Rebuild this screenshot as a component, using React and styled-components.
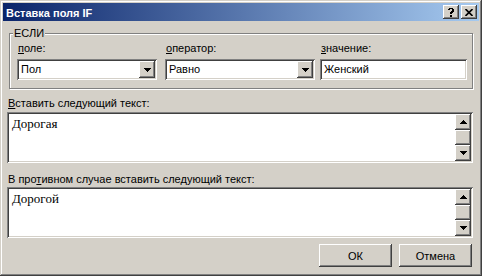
import { createGlobalStyle, styled } from "styled-components";

const GlobalStyle = createGlobalStyle`
  html, body {
    margin: 0;
    padding: 0;
    background: #d4d0c8;
  }
  body {
    font-family: "Liberation Sans", Arial, sans-serif;
    font-size: 11px;
    color: #000;
  }
`;

const raised = `
  box-shadow: inset -1px -1px #404040, inset 1px 1px #ffffff,
    inset -2px -2px #808080, inset 2px 2px #d4d0c8;
`;

const sunken = `
  box-shadow: inset 1px 1px #808080, inset -1px -1px #ffffff,
    inset 2px 2px #404040, inset -2px -2px #d4d0c8;
`;

const StyledWindow = styled.div`
  width: 482px;
  height: 276px;
  box-sizing: border-box;
  padding: 3px;
  background: #d4d0c8;
  box-shadow: inset -1px -1px #404040, inset 1px 1px #d4d0c8,
    inset -2px -2px #808080, inset 2px 2px #ffffff;
  display: flex;
  flex-direction: column;
`;

const StyledTitleBar = styled.div`
  height: 18px;
  display: flex;
  align-items: center;
  padding: 0 2px 0 3px;
  background: linear-gradient(to right, #0a246a, #a6caf0);
  color: #fff;
  font-weight: bold;
  font-size: 11px;
`;

const StyledTitle = styled.div`
  flex: 1;
  padding-top: 1px;
`;

const StyledTitleButton = styled.div`
  width: 16px;
  height: 14px;
  margin-left: ${(p) => (p.$gap ? "2px" : "0")};
  background: #d4d0c8;
  ${raised}
  display: flex;
  align-items: center;
  justify-content: center;
  color: #000;
`;

const StyledBody = styled.div`
  flex: 1;
  padding: 12px 6px 0 4px;
  display: flex;
  flex-direction: column;
`;

const StyledGroup = styled.div`
  position: relative;
  box-sizing: border-box;
  margin-left: 2px;
  height: 56px;
  border: 1px solid #808080;
  box-shadow: inset 1px 1px #ffffff, 1px 1px #ffffff;
  padding: 8px 0 0 7px;
  display: grid;
  grid-template-columns: 140px 150px 144px;
  align-content: start;
  column-gap: 8px;
`;

const StyledCaption = styled.span`
  position: absolute;
  top: -7px;
  left: 3px;
  padding: 0 1px;
  background: #d4d0c8;
  line-height: 13px;
`;

const StyledColumn = styled.div`
  display: flex;
  flex-direction: column;
  gap: 4px;
  margin-left: ${(p) => p.$shift || 0}px;
`;

const StyledLabel = styled.div`
  line-height: 13px;
  white-space: nowrap;
  margin-top: ${(p) => p.$top || 0}px;
  margin-left: 1px;
`;

const StyledField = styled.div`
  height: 21px;
  box-sizing: border-box;
  background: #fff;
  ${sunken}
  display: flex;
  align-items: center;
  padding: 2px;
`;

const StyledFieldText = styled.div`
  flex: 1;
  padding-left: 2px;
  line-height: 13px;
`;

const StyledDropButton = styled.div`
  width: 16px;
  height: 17px;
  background: #d4d0c8;
  ${raised}
  display: flex;
  align-items: center;
  justify-content: center;
`;

const StyledMemo = styled.div`
  height: 51px;
  box-sizing: border-box;
  margin-top: ${(p) => p.$top || 0}px;
  background: #fff;
  ${sunken}
  padding: 2px;
  display: flex;
`;

const StyledMemoText = styled.div`
  flex: 1;
  padding: 2px 0 0 3px;
  font-family: "Liberation Serif", "Times New Roman", serif;
  font-size: 13px;
  line-height: 15px;
`;

const StyledScrollbar = styled.div`
  width: 16px;
  display: flex;
  flex-direction: column;
`;

const StyledScrollPart = styled.div`
  height: ${(p) => p.$h}px;
  flex: ${(p) => (p.$grow ? 1 : "none")};
  background: #d4d0c8;
  ${raised}
  display: flex;
  align-items: center;
  justify-content: center;
`;

const StyledFooter = styled.div`
  display: flex;
  justify-content: flex-end;
  gap: 7px;
  margin-top: 6px;
  padding-right: 1px;
`;

const StyledButton = styled.div`
  width: 73px;
  height: 23px;
  background: #d4d0c8;
  ${raised}
  display: flex;
  align-items: center;
  justify-content: center;
`;

function Arrow({ up }) {
  return (
    <svg width="7" height="4" viewBox="0 0 7 4">
      <path
        d={up ? "M3.5 0 L7 4 L0 4 Z" : "M0 0 L7 0 L3.5 4 Z"}
        fill="#000"
        shapeRendering="crispEdges"
      />
    </svg>
  );
}

function Combo({ value }) {
  return (
    <StyledField>
      <StyledFieldText>{value}</StyledFieldText>
      <StyledDropButton>
        <Arrow />
      </StyledDropButton>
    </StyledField>
  );
}

function Memo({ text, top }) {
  return (
    <StyledMemo $top={top}>
      <StyledMemoText>{text}</StyledMemoText>
      <StyledScrollbar>
        <StyledScrollPart $h={16}>
          <Arrow up />
        </StyledScrollPart>
        <StyledScrollPart $grow />
        <StyledScrollPart $h={16}>
          <Arrow />
        </StyledScrollPart>
      </StyledScrollbar>
    </StyledMemo>
  );
}

export default function App() {
  return (
    <>
      <GlobalStyle />
      <StyledWindow>
        <StyledTitleBar>
          <StyledTitle>Вставка поля IF</StyledTitle>
          <StyledTitleButton>
            <svg width="8" height="9" viewBox="0 0 8 9" shapeRendering="crispEdges">
              <path
                d="M1 1h1v-1h4v1h1v3h-1v1h-1v1h-2v-2h1v-1h1v-2h-2v1h-2z M3 7h2v2h-2z"
                fill="#000"
              />
            </svg>
          </StyledTitleButton>
          <StyledTitleButton $gap>
            <svg width="8" height="7" viewBox="0 0 8 7">
              <path d="M0.5 0 L7.5 7 M7.5 0 L0.5 7" stroke="#000" strokeWidth="1.6" />
            </svg>
          </StyledTitleButton>
        </StyledTitleBar>
        <StyledBody>
          <StyledGroup>
            <StyledCaption>ЕСЛИ</StyledCaption>
            <StyledColumn>
              <StyledLabel>
                <u>п</u>оле:
              </StyledLabel>
              <Combo value="Пол" />
            </StyledColumn>
            <StyledColumn>
              <StyledLabel>
                <u>о</u>ператор:
              </StyledLabel>
              <Combo value="Равно" />
            </StyledColumn>
            <StyledColumn $shift={-3}>
              <StyledLabel>
                <u>з</u>начение:
              </StyledLabel>
              <StyledField>
                <StyledFieldText>Женский</StyledFieldText>
              </StyledField>
            </StyledColumn>
          </StyledGroup>
          <StyledLabel $top={8}>
            <u>В</u>ставить следующий текст:
          </StyledLabel>
          <Memo text="Дорогая" top={2} />
          <StyledLabel $top={10}>
            В про<u>т</u>ивном случае вставить следующий текст:
          </StyledLabel>
          <Memo text="Дорогой" top={1} />
          <StyledFooter>
            <StyledButton>ОК</StyledButton>
            <StyledButton>Отмена</StyledButton>
          </StyledFooter>
        </StyledBody>
      </StyledWindow>
    </>
  );
}
